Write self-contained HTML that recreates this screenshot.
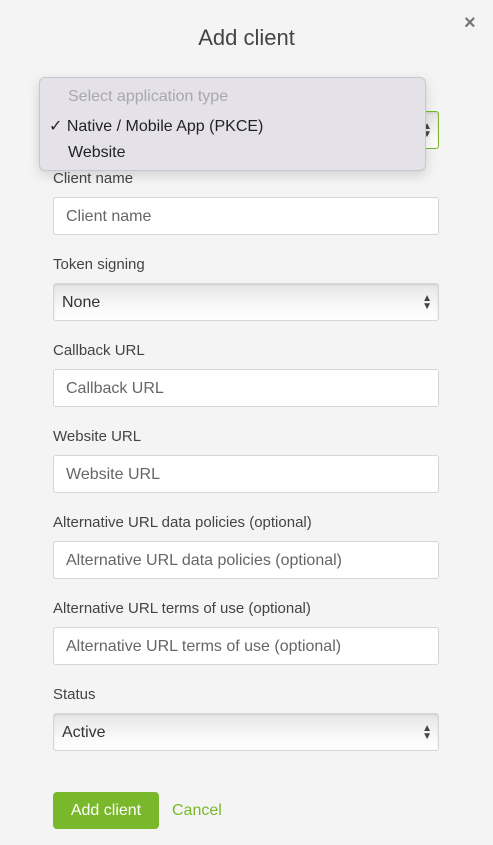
<!DOCTYPE html>
<html><head><meta charset="utf-8"><style>
*{box-sizing:border-box;margin:0;padding:0}
body{width:493px;height:845px;background:#f4f4f4;font-family:"Liberation Sans",sans-serif;position:relative;overflow:hidden;color:#333}
.t{position:absolute;top:25px;left:0;width:493px;text-align:center;font-size:22px;color:#444}
.x{position:absolute;left:464px;top:12px;font-size:20px;color:#777;font-weight:bold}
.l{position:absolute;left:53px;font-size:15px;color:#444}
.i{position:absolute;left:53px;width:386px;height:38px;background:#fff;border:1px solid #d4d6da;border-radius:3px;font-size:16px;color:#666;padding:10px 12px}
.s{background:linear-gradient(#e6e6e6,#fafafa 70%,#fff);color:#333;padding:10px 8px;box-shadow:inset 0 1px 2px rgba(0,0,0,.1)}
.ar{position:absolute;right:6px;top:11px;font-size:10px;line-height:8px;color:#444}
.dd{position:absolute;left:39px;top:77px;width:387px;height:94px;background:#e4e2e8;border:1px solid #c8c6cc;border-radius:6px;box-shadow:0 4px 12px rgba(0,0,0,.15);font-size:16px}
.dd div{position:absolute;left:28px}
.b{position:absolute;left:53px;top:792px;width:106px;height:37px;background:#78b82a;border-radius:4px;color:#fff;font-size:16px;text-align:center;line-height:37px}
.c{position:absolute;left:172px;top:802px;color:#78b82a;font-size:16px}
</style></head><body>
<div class="t">Add client</div>
<div class="x">×</div>
<div class="i s" style="top:111px;border-color:#78b82a"><span class="ar">▲<br>▼</span></div>
<div class="l" style="top:170px">Client name</div>
<div class="i" style="top:197px">Client name</div>
<div class="l" style="top:256px">Token signing</div>
<div class="i s" style="top:283px">None<span class="ar">▲<br>▼</span></div>
<div class="l" style="top:342px">Callback URL</div>
<div class="i" style="top:369px">Callback URL</div>
<div class="l" style="top:428px">Website URL</div>
<div class="i" style="top:455px">Website URL</div>
<div class="l" style="top:514px">Alternative URL data policies (optional)</div>
<div class="i" style="top:541px">Alternative URL data policies (optional)</div>
<div class="l" style="top:600px">Alternative URL terms of use (optional)</div>
<div class="i" style="top:627px">Alternative URL terms of use (optional)</div>
<div class="l" style="top:686px">Status</div>
<div class="i s" style="top:713px">Active<span class="ar">▲<br>▼</span></div>
<div class="dd">
<div style="top:10px;color:#a8a7ac">Select application type</div>
<div style="top:38px;left:9px;color:#222">✓ Native / Mobile App (PKCE)</div>
<div style="top:66px;color:#222">Website</div>
</div>
<div class="b">Add client</div>
<div class="c">Cancel</div>
</body></html>
